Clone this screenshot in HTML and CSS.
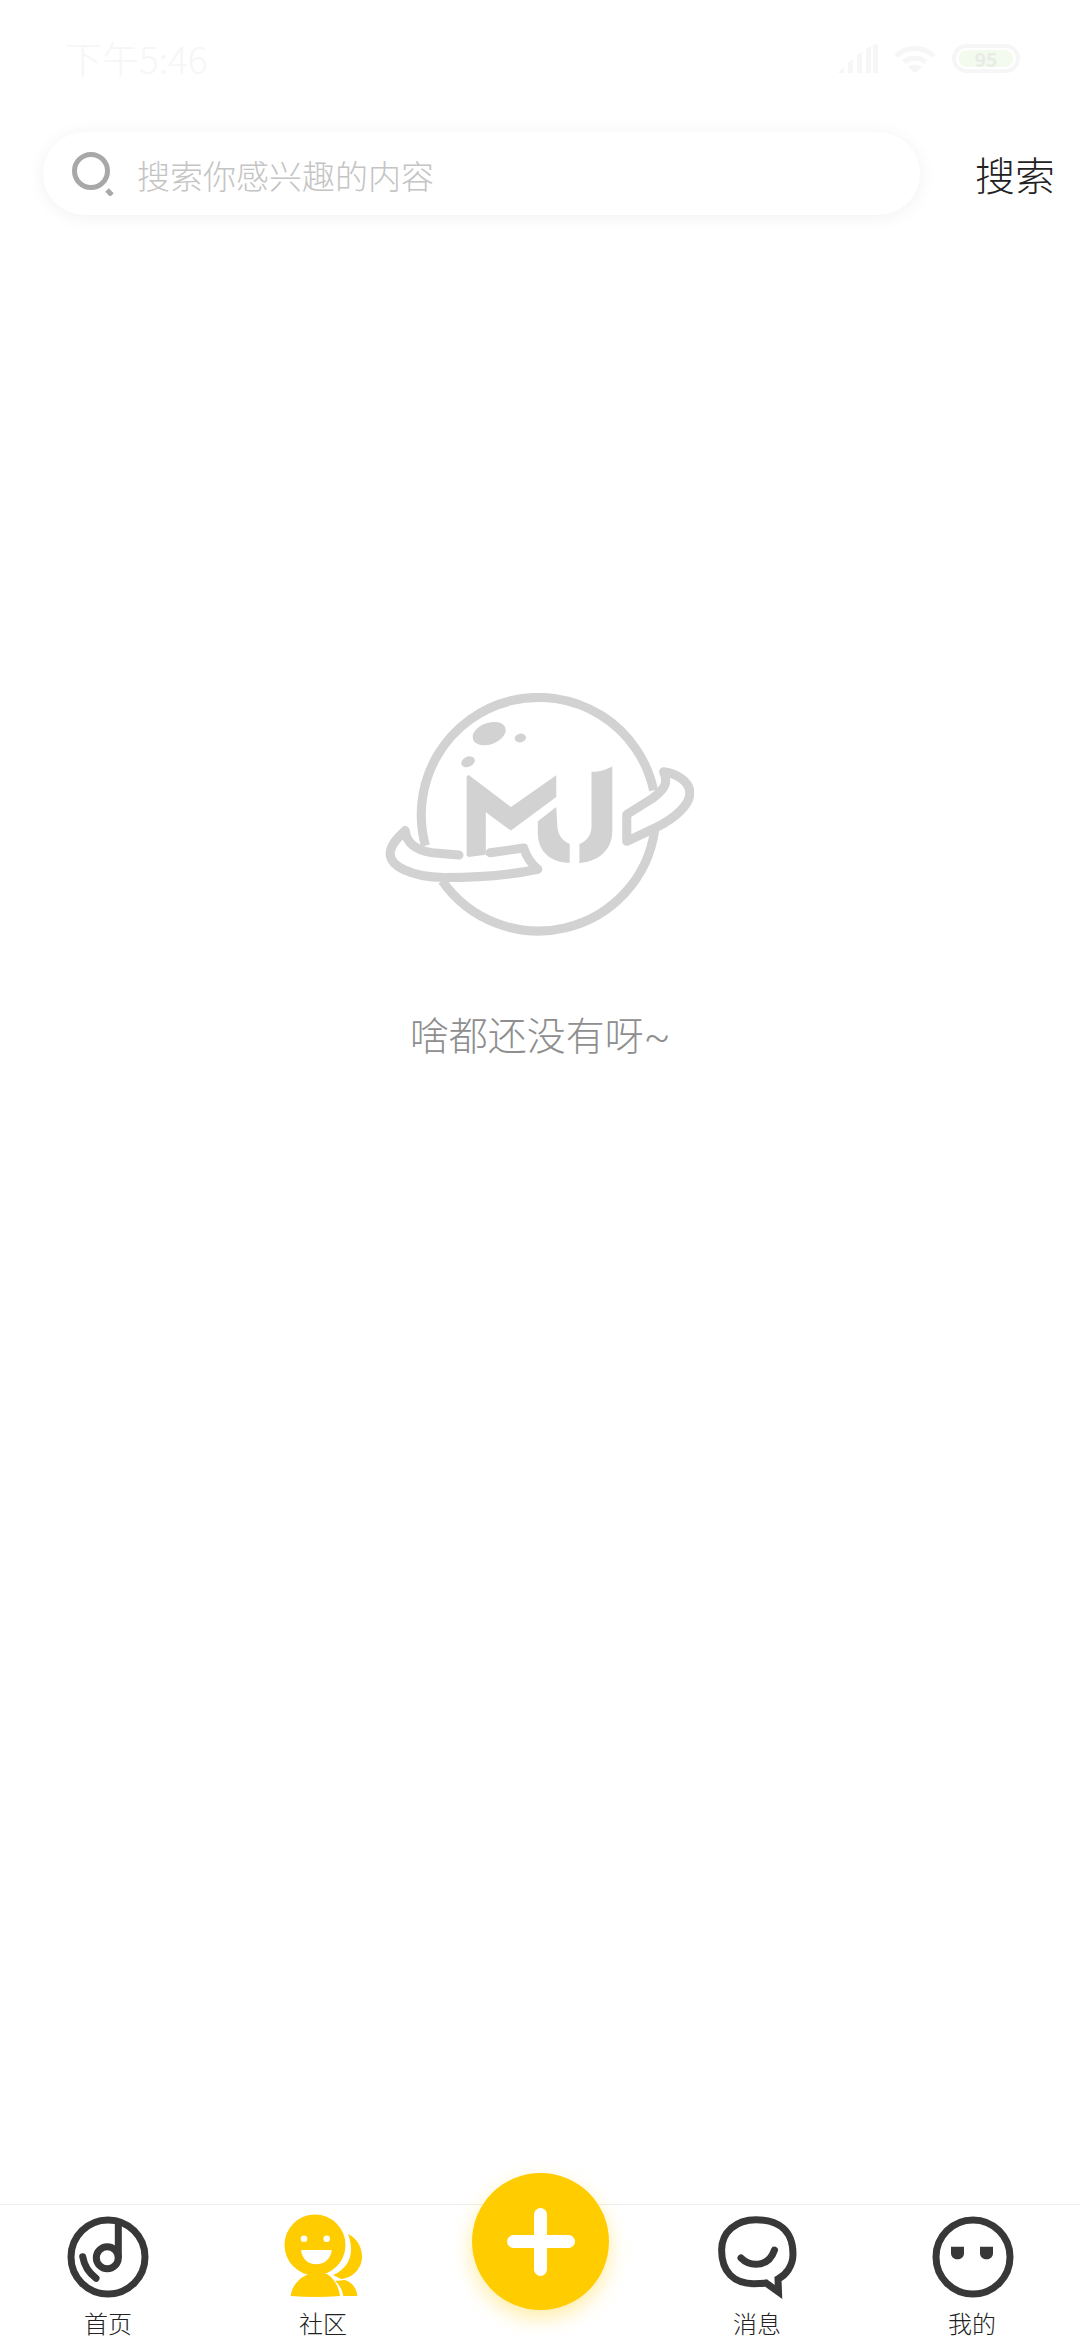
FILE: index.html
```html
<!DOCTYPE html>
<html lang="zh-CN">
<head>
    <meta charset="UTF-8">
    <title>搜索</title>
    <link rel="stylesheet" href="styles.css">
</head>
<body>
<div class="page">
    <div class="status-bar">
        <span class="status-time">下午5:46</span>
        <div class="status-icons">
            <svg class="icon-signal" viewBox="0 0 40 29">
                <path d="M0 29 L6 23 V29 Z M10 19 L15 15 V29 H10 Z M19 11 L24 8 V29 H19 Z M28 5 L33 2 V29 H28 Z M35 1 L40 0 V29 H35 Z"/>
            </svg>
            <svg class="icon-wifi" viewBox="0 0 42 29">
                <path class="wifi-arc" d="M2 12 C13 2 29 2 40 12"/>
                <path class="wifi-arc" d="M10 18 C16 13 26 13 32 18"/>
                <path class="wifi-dot" d="M21 29 L14 23 C18 20 24 20 28 23 Z"/>
            </svg>
            <div class="battery"><span class="battery-level">95</span></div>
        </div>
    </div>

    <div class="search-row">
        <div class="search-box">
            <svg class="icon-search" viewBox="0 0 44 44">
                <circle cx="20" cy="19" r="16.5"/>
                <path d="M36 38 L41 43"/>
            </svg>
            <span class="search-placeholder">搜索你感兴趣的内容</span>
        </div>
        <span class="search-btn">搜索</span>
    </div>

    <div class="empty">
        <svg class="empty-logo" viewBox="75 70 920 730">
            <path class="logo-line" d="M195 525 A350 350 0 1 1 875 360"/>
            <path class="logo-line" d="M878 480 A350 350 0 0 1 245 630"/>
            <path class="logo-line logo-join" d="M295 553 L215 546 C165 538 138 515 135 480 C108 505 90 525 90 548 C90 585 150 618 250 620 C360 620 450 612 530 595 C505 575 495 555 488 532 L388 546"/>
            <path class="logo-line logo-join" d="M905 305 C918 335 912 355 870 385 L795 432 L795 512 L880 472 C945 440 983 400 983 368 C983 335 945 310 905 305 Z"/>
            <ellipse class="logo-fill" cx="385" cy="191" rx="51" ry="32" transform="rotate(-20 385 191)"/>
            <ellipse class="logo-fill" cx="478" cy="204" rx="17" ry="13" transform="rotate(-10 478 204)"/>
            <ellipse class="logo-fill" cx="322" cy="275" rx="21" ry="15" transform="rotate(-25 322 275)"/>
            <path class="logo-fill" d="M318 318 L324 314 L450 410 L585 315 L585 380 L450 480 L375 425 L375 552 L324 559 L318 555 Z"/>
            <path class="logo-fill" d="M585 410 L530 452 L530 490 C532 545 570 575 625 576 L625 520 C598 508 590 490 588 465 Z"/>
            <path class="logo-fill" d="M690 305 C715 305 735 298 752 288 L752 480 C752 535 715 572 654 577 L654 520 C680 510 690 490 690 465 Z"/>
        </svg>
        <p class="empty-text">啥都还没有呀~</p>
    </div>

    <div class="tabbar">
        <div class="tab">
            <svg class="tab-icon" viewBox="0 0 90 90">
                <circle class="ico-line" cx="45" cy="45" r="37"/>
                <circle class="ico-line" cx="44.3" cy="45.7" r="11"/>
                <path class="ico-line" d="M55.3 46 V9"/>
                <path class="ico-line round" d="M19.7 44.7 Q22 58 33 66.3"/>
            </svg>
            <span class="tab-label">首页</span>
        </div>
        <div class="tab">
            <svg class="tab-icon" viewBox="0 0 90 90">
                <path class="ico-yellow" d="M69 22 C78 26 83 35 83 45 C83 56 74 66 62 67 L54 63 C66 58 72 48 72 38 C72 32 71 27 69 22 Z"/>
                <path class="ico-yellow" d="M56 69 L66 68 C73 70 78 77 78.3 84 L64.3 84 C63 77 60 72 56 69 Z"/>
                <circle class="ico-yellow" cx="36" cy="33" r="30.5"/>
                <path class="ico-yellow" d="M11.7 84 C13 73 21 65 30 62 L48 62 C56 67 60 76 61 84 Q36 86 11.7 84 Z"/>
                <circle class="ico-white" cx="25" cy="26.7" r="3.3"/>
                <circle class="ico-white" cx="47.7" cy="26.7" r="3.3"/>
                <path class="ico-white" d="M22 38 H52.7 C52 47 45 52.3 37.3 52.3 C29 52.3 23 47 22 38 Z"/>
            </svg>
            <span class="tab-label tab-label-left">社区</span>
        </div>
        <div class="tab tab-add">
            <div class="add-btn"><span class="add-h"></span><span class="add-v"></span></div>
        </div>
        <div class="tab">
            <svg class="tab-icon" viewBox="0 0 90 90">
                <path class="ico-line" d="M45 7.7 C67 7.7 82 18 82 42 C82 54 75 63 67 67 L67.5 80 L55 71 C51 71.7 47 71.7 43 71.7 C23 71.7 10.6 60 10.6 38 C10.6 20 25 7.7 45 7.7 Z"/>
                <path class="ico-line round" d="M30 46 C38 54 57 57 63.5 38"/>
            </svg>
            <span class="tab-label tab-label-right">消息</span>
        </div>
        <div class="tab">
            <svg class="tab-icon" viewBox="0 0 90 90">
                <circle class="ico-line" cx="46" cy="45" r="37"/>
                <path class="ico-dark" d="M24 34.7 H37 V41 C37 45 34 47.3 30.5 47.3 C27 47.3 24 45 24 41 Z"/>
                <path class="ico-dark" d="M53 34.7 H66 V41 C66 45 63 47.3 59.5 47.3 C56 47.3 53 45 53 41 Z"/>
            </svg>
            <span class="tab-label">我的</span>
        </div>
    </div>
</div>
</body>
</html>
```

FILE: styles.css
```css
* {
    box-sizing: border-box;
}
body {
    margin: 0;
    background-color: #fff;
    font-family: "Noto Sans CJK SC", "Noto Sans", sans-serif;
}
.page {
    display: flex;
    flex-direction: column;
    height: 2340px;
}
/*状态栏*/
.status-bar {
    display: flex;
    justify-content: space-between;
    align-items: center;
    height: 116px;
    padding: 0 60px 0 65px;
}
.status-time {
    font-size: 37px;
    font-weight: 300;
    line-height: 1;
    color: #f6f6f6;
}
.status-icons {
    display: flex;
    align-items: center;
    gap: 16px;
}
.icon-signal {
    width: 40px;
    height: 29px;
    fill: #f6f6f6;
}
.icon-wifi {
    width: 42px;
    height: 29px;
}
.wifi-arc {
    fill: none;
    stroke: #f6f6f6;
    stroke-width: 5;
}
.wifi-dot {
    fill: #f6f6f6;
}
.battery {
    display: flex;
    justify-content: center;
    align-items: center;
    width: 68px;
    height: 29px;
    border: 4px solid #f6f6f6;
    border-radius: 15px;
}
.battery-level {
    width: 54px;
    height: 17px;
    border-radius: 8px;
    background-color: #f3faee;
    color: #e8ece5;
    font-size: 19px;
    font-weight: 700;
    line-height: 17px;
    text-align: center;
}
/*搜索栏*/
.search-row {
    display: flex;
    align-items: center;
    height: 83px;
    margin-top: 16px;
    padding: 0 25px 0 43px;
}
.search-box {
    display: flex;
    align-items: center;
    gap: 22px;
    width: 877px;
    height: 83px;
    padding-left: 28px;
    border-radius: 42px;
    background-color: #fff;
    box-shadow: 0 2px 18px rgba(0, 0, 0, .06);
}
.icon-search {
    width: 44px;
    height: 44px;
    fill: none;
    stroke: #a8a8a8;
    stroke-width: 5;
}
.search-placeholder {
    padding-top: 3px;
    font-size: 33px;
    font-weight: 300;
    line-height: 1;
    color: #c4c4c4;
}
.search-btn {
    margin-left: auto;
    font-size: 40px;
    font-weight: 300;
    line-height: 1;
    color: #222;
}
/*空状态*/
.empty {
    flex-grow: 1;
    display: flex;
    flex-direction: column;
    align-items: center;
    padding-top: 478px;
}
.empty-logo {
    width: 309px;
    height: 245px;
    margin-left: -2px;
}
.logo-line {
    fill: none;
    stroke: #d2d2d2;
    stroke-width: 27;
}
.logo-join {
    stroke-linejoin: round;
    stroke-linecap: round;
}
.logo-fill {
    fill: #d2d2d2;
}
.empty-text {
    margin: 74px 0 0;
    font-family: Roboto, "Noto Sans CJK SC", sans-serif;
    font-size: 39px;
    font-weight: 300;
    line-height: 50px;
    color: #8e8e8e;
}
/*底部导航*/
.tabbar {
    position: relative;
    display: flex;
    height: 136px;
    padding-top: 7px;
    border-top: 1px solid #eee;
    background-color: #fff;
}
.tab {
    flex: 1;
    display: flex;
    flex-direction: column;
    align-items: center;
}
.tab-icon {
    width: 90px;
    height: 90px;
}
.tab-label {
    margin-top: 7px;
    font-size: 24px;
    font-weight: 300;
    line-height: 28px;
    color: #222;
}
.tab-label-left {
    margin-right: 2px;
}
.tab-label-right {
    margin-left: 2px;
}
.ico-line {
    fill: none;
    stroke: #383838;
    stroke-width: 7;
}
.round {
    stroke-linecap: round;
}
.ico-dark {
    fill: #383838;
}
.ico-yellow {
    fill: #fc0;
}
.ico-white {
    fill: #fff;
}
/*发布按钮*/
.add-btn {
    position: absolute;
    left: 472px;
    top: -32px;
    width: 137px;
    height: 137px;
    border-radius: 50%;
    background-color: #fc0;
    box-shadow: 0 8px 20px rgba(255, 204, 0, .35);
}
.add-h, .add-v {
    position: absolute;
    border-radius: 7px;
    background-color: #fff;
}
.add-h {
    left: 35px;
    top: 62px;
    width: 68px;
    height: 13px;
}
.add-v {
    left: 62px;
    top: 35px;
    width: 13px;
    height: 68px;
}
```
